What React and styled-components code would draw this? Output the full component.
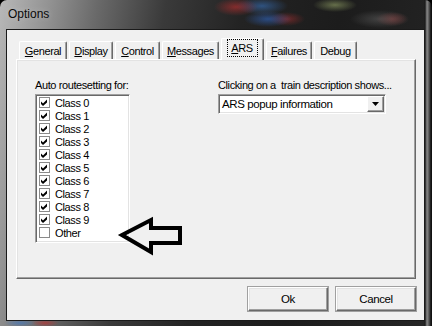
import React from "react";
import styled, { createGlobalStyle } from "styled-components";

const Global = createGlobalStyle`
  html, body { margin: 0; padding: 0; background: #000; }
  body {
    width: 432px; height: 326px; overflow: hidden;
    font-family: "Liberation Sans", Arial, sans-serif;
  }
`;

const Frame = styled.div`
  box-sizing: border-box;
  width: 432px;
  height: 326px;
  display: flex;
  flex-direction: column;
  padding: 0 7px 6px 6px;
  border-radius: 7px 7px 0 0;
  background:
    radial-gradient(ellipse 22px 9px at 236px 7px, rgba(210, 50, 50, 0.55), transparent),
    radial-gradient(ellipse 26px 9px at 262px 6px, rgba(60, 130, 220, 0.5), transparent),
    radial-gradient(ellipse 24px 8px at 268px 19px, rgba(50, 110, 210, 0.55), transparent),
    radial-gradient(ellipse 18px 7px at 287px 19px, rgba(200, 50, 50, 0.45), transparent),
    radial-gradient(ellipse 22px 7px at 335px 5px, rgba(190, 210, 130, 0.45), transparent),
    radial-gradient(ellipse 30px 9px at 380px 19px, rgba(90, 90, 90, 0.6), transparent),
    radial-gradient(ellipse 16px 7px at 392px 19px, rgba(200, 70, 70, 0.45), transparent),
    radial-gradient(ellipse 16px 4px at 20px 323px, rgba(60, 120, 200, 0.6), transparent),
    radial-gradient(ellipse 14px 4px at 45px 323px, rgba(200, 40, 40, 0.6), transparent),
    linear-gradient(to right, transparent 424px, #1a1a1a 425px, #8a8a8a 427px, #555 429px, #111 431px),
    linear-gradient(100deg, #b8b8b8 0%, #939393 10%, #6a6a6a 20%, #3a3a3a 34%, #232323 50%, #1c1c1c 70%, #262626 100%);
`;

const TitleBar = styled.div`
  height: 28px;
  flex: none;
  display: flex;
  align-items: center;
  padding: 0 0 1px 2px;
  font-size: 12px;
  color: #0a0a0a;
  text-shadow: 0 0 6px rgba(255, 255, 255, 0.35);
`;

const Client = styled.div`
  flex: 1;
  display: flex;
  flex-direction: column;
  background: #f0f0f0;
  border: 1px solid #1a1a1a;
  padding: 8px 8px 9px 9px;
  font-size: 11px;
  letter-spacing: -0.4px;
  color: #000;
`;

const TabStrip = styled.div`
  height: 21px;
  flex: none;
  display: flex;
  align-items: flex-end;
  gap: 2px;
  padding-left: 3px;
  position: relative;
  z-index: 1;
`;

const Tab = styled.div`
  box-sizing: border-box;
  width: ${(p) => p.$w}px;
  height: ${(p) => (p.$active ? 22 : 18)}px;
  margin-bottom: ${(p) => (p.$active ? -1 : 0)}px;
  padding-bottom: ${(p) => (p.$active ? 3 : 0)}px;
  background: #f0f0f0;
  border-top: 1px solid #fff;
  border-left: 1px solid #fff;
  border-right: 1px solid #696969;
  box-shadow: inset -1px 0 #a0a0a0;
  border-radius: 2px 2px 0 0;
  display: flex;
  align-items: center;
  justify-content: center;
  white-space: nowrap;
`;

const FocusText = styled.span`
  outline: 1px dotted #000;
  outline-offset: 1px;
  padding: 1px 3px 1px 2px;
`;

const Panel = styled.div`
  box-sizing: border-box;
  height: 220px;
  flex: none;
  position: relative;
  border-top: 1px solid #fff;
  border-left: 1px solid #fff;
  border-right: 1px solid #696969;
  border-bottom: 1px solid #696969;
  box-shadow: inset -1px -1px #a0a0a0, inset 1px 1px #e3e3e3;
  padding: 19px 0 0 18px;
  display: flex;
`;

const LeftCol = styled.div`
  width: 183px;
  display: flex;
  flex-direction: column;
`;

const RightCol = styled.div`
  display: flex;
  flex-direction: column;
`;

const Label = styled.div`
  height: 13px;
  line-height: 13px;
  margin-bottom: 2px;
  white-space: pre;
`;

const ListBox = styled.div`
  box-sizing: border-box;
  width: 95px;
  height: 149px;
  background: #fff;
  border: 1px solid;
  border-color: #a0a0a0 #fff #fff #a0a0a0;
  box-shadow: inset 1px 1px #696969, inset -1px -1px #e3e3e3;
  padding: 1px 0 0 1px;
`;

const Row = styled.div`
  height: 13px;
  display: flex;
  align-items: center;
  gap: 5px;
  padding-left: 2px;
`;

const Check = styled.span`
  box-sizing: border-box;
  width: 11px;
  height: 11px;
  border: 1px solid #8a8a8a;
  background: #fff;
  display: flex;
  align-items: center;
  justify-content: center;
`;

const Combo = styled.div`
  box-sizing: border-box;
  width: 168px;
  height: 20px;
  background: #fff;
  border: 1px solid;
  border-color: #a0a0a0 #fff #fff #a0a0a0;
  box-shadow: inset 1px 1px #696969, inset -1px -1px #e3e3e3;
  padding: 1px;
  display: flex;
  align-items: stretch;
`;

const ComboText = styled.div`
  flex: 1;
  display: flex;
  align-items: center;
  padding-left: 2px;
  font-size: 11.5px;
`;

const ComboButton = styled.div`
  box-sizing: border-box;
  width: 17px;
  background: #f0f0f0;
  border-top: 1px solid #fff;
  border-left: 1px solid #fff;
  border-right: 1px solid #696969;
  border-bottom: 1px solid #696969;
  box-shadow: inset -1px -1px #a0a0a0;
  display: flex;
  align-items: center;
  justify-content: center;
`;

const ButtonRow = styled.div`
  display: flex;
  justify-content: flex-end;
  gap: 8px;
  margin-top: 8px;
`;

const PushButton = styled.div`
  box-sizing: border-box;
  width: 80px;
  height: 24px;
  background: #f0f0f0;
  border-top: 1px solid #fff;
  border-left: 1px solid #fff;
  border-right: 1px solid #696969;
  border-bottom: 1px solid #696969;
  box-shadow: inset -1px -1px #a0a0a0, inset 1px 1px #e3e3e3, 0 0 0 0 transparent;
  outline: 1px solid #a0a0a0;
  outline-offset: 0;
  display: flex;
  align-items: center;
  justify-content: center;
  font-size: 11.5px;
`;

const Arrow = styled.svg`
  position: absolute;
  left: 98px;
  top: 148px;
`;

const tabs = [
  { label: "General", u: true, w: 48 },
  { label: "Display", u: true, w: 44 },
  { label: "Control", u: true, w: 45 },
  { label: "Messages", u: true, w: 57 },
  { label: "ARS", u: true, w: 43, active: true },
  { label: "Failures", u: true, w: 46 },
  { label: "Debug", u: false, w: 43 },
];

const classes = [
  ...Array.from({ length: 10 }, (_, i) => ({ name: `Class ${i}`, on: true })),
  { name: "Other", on: false },
];

function TabLabel({ label, u }) {
  return u ? (
    <>
      <u>{label[0]}</u>
      {label.slice(1)}
    </>
  ) : (
    label
  );
}

export default function App() {
  return (
    <>
      <Global />
      <Frame>
        <TitleBar>Options</TitleBar>
        <Client>
          <TabStrip>
            {tabs.map((t) => (
              <Tab key={t.label} $w={t.w} $active={t.active}>
                {t.active ? (
                  <FocusText>
                    <TabLabel {...t} />
                  </FocusText>
                ) : (
                  <TabLabel {...t} />
                )}
              </Tab>
            ))}
          </TabStrip>
          <Panel>
            <LeftCol>
              <Label>Auto routesetting for:</Label>
              <ListBox>
                {classes.map((c) => (
                  <Row key={c.name}>
                    <Check>
                      {c.on && (
                        <svg width="9" height="9" viewBox="0 0 9 9">
                          <polygon points="1,3.5 3,5.5 7,1.5 7,4.5 3,8 1,6" fill="#000" />
                        </svg>
                      )}
                    </Check>
                    {c.name}
                  </Row>
                ))}
              </ListBox>
            </LeftCol>
            <RightCol>
              <Label>{"Clicking on a  train description shows..."}</Label>
              <Combo>
                <ComboText>ARS popup information</ComboText>
                <ComboButton>
                  <svg width="7" height="4" viewBox="0 0 7 4">
                    <polygon points="0,0 7,0 3.5,4" fill="#000" />
                  </svg>
                </ComboButton>
              </Combo>
            </RightCol>
            <Arrow width="75" height="55" viewBox="0 0 75 55">
              <polygon
                points="7,27 36,12 36,20 65,20 65,35 36,35 36,44"
                fill="none"
                stroke="#000"
                strokeWidth="4"
                strokeLinejoin="miter"
              />
            </Arrow>
          </Panel>
          <ButtonRow>
            <PushButton>Ok</PushButton>
            <PushButton>Cancel</PushButton>
          </ButtonRow>
        </Client>
      </Frame>
    </>
  );
}
